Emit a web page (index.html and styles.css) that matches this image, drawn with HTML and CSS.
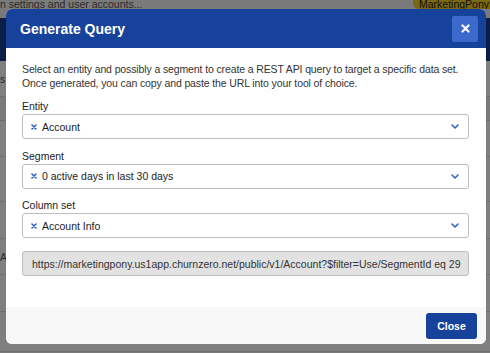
FILE: index.html
```html
<!DOCTYPE html>
<html>
<head>
<meta charset="utf-8">
<link rel="stylesheet" href="styles.css">
</head>
<body>
<div class="page">
  <div class="topbar">
    <span class="crumb">n settings and user accounts...</span>
    <span class="badge">MarketingPony</span>
  </div>
  <div class="navbar"></div>
  <div class="table">
    <div class="row r1"><span class="cell">s</span></div>
    <div class="row r2"></div>
    <div class="row r3"></div>
    <div class="row r4"></div>
    <div class="row r5"></div>
    <div class="row r6"><span class="cell">AP</span></div>
    <div class="row r7"></div>
    <div class="row r8"></div>
  </div>
</div>
<div class="overlay"></div>
<div class="modal">
  <div class="modal-header">
    <h1 class="title">Generate Query</h1>
    <button class="x-btn" aria-label="close">
      <svg width="9" height="9" viewBox="0 0 9 9"><path d="M1.5 1.5 L7.5 7.5 M7.5 1.5 L1.5 7.5" stroke="#fff" stroke-width="2.2" stroke-linecap="round"/></svg>
    </button>
  </div>
  <div class="modal-body">
    <p class="desc">Select an entity and possibly a segment to create a REST API query to target a specific data set. Once generated, you can copy and paste the URL into your tool of choice.</p>
    <div class="field">
      <div class="label">Entity</div>
      <div class="select">
        <span class="tag-x"><svg width="6" height="6" viewBox="0 0 6 6"><path d="M1 1 L5 5 M5 1 L1 5" stroke="#2f63c8" stroke-width="1.6" stroke-linecap="round"/></svg></span>
        <span class="val">Account</span>
        <svg class="chev" width="8" height="5" viewBox="0 0 8 5"><path d="M1 1 L4 4 L7 1" fill="none" stroke="#2f63c8" stroke-width="1.6" stroke-linecap="round" stroke-linejoin="round"/></svg>
      </div>
    </div>
    <div class="field">
      <div class="label">Segment</div>
      <div class="select">
        <span class="tag-x"><svg width="6" height="6" viewBox="0 0 6 6"><path d="M1 1 L5 5 M5 1 L1 5" stroke="#2f63c8" stroke-width="1.6" stroke-linecap="round"/></svg></span>
        <span class="val">0 active days in last 30 days</span>
        <svg class="chev" width="8" height="5" viewBox="0 0 8 5"><path d="M1 1 L4 4 L7 1" fill="none" stroke="#2f63c8" stroke-width="1.6" stroke-linecap="round" stroke-linejoin="round"/></svg>
      </div>
    </div>
    <div class="field">
      <div class="label">Column set</div>
      <div class="select">
        <span class="tag-x"><svg width="6" height="6" viewBox="0 0 6 6"><path d="M1 1 L5 5 M5 1 L1 5" stroke="#2f63c8" stroke-width="1.6" stroke-linecap="round"/></svg></span>
        <span class="val">Account Info</span>
        <svg class="chev" width="8" height="5" viewBox="0 0 8 5"><path d="M1 1 L4 4 L7 1" fill="none" stroke="#2f63c8" stroke-width="1.6" stroke-linecap="round" stroke-linejoin="round"/></svg>
      </div>
    </div>
    <div class="url">https://marketingpony.us1app.churnzero.net/public/v1/Account?$filter=Use/SegmentId eq 29</div>
  </div>
  <div class="modal-footer">
    <button class="close-btn">Close</button>
  </div>
</div>
</body>
</html>
```
FILE: styles.css
```css
* { box-sizing: border-box; }
html, body { margin: 0; padding: 0; }
body {
  width: 490px;
  height: 353px;
  overflow: hidden;
  position: relative;
  font-family: "Liberation Sans", Arial, sans-serif;
  background: #f4f4f4;
}
.page { width: 490px; height: 353px; overflow: hidden; }
.topbar {
  height: 18px;
  background: #f4f4f4;
  display: flex;
  justify-content: space-between;
  align-items: flex-start;
  overflow: hidden;
}
.crumb {
  font-size: 10.5px;
  line-height: 10px;
  color: #555;
  margin-top: -1px;
}
.badge {
  display: block;
  height: 9px;
  width: 77px;
  background: #f7d31f;
  border-bottom-left-radius: 6px;
  font-size: 10.5px;
  line-height: 8px;
  color: #222;
  padding-left: 6px;
  overflow: hidden;
  white-space: nowrap;
}
.navbar { height: 43px; background: #1a3c8c; }
.table { background: #fff; }
.row { border-bottom: 1px solid #ddd; font-size: 10.5px; color: #555; display: flex; align-items: center; }
.r1 { height: 36px; background: #fff; }
.r2 { height: 24px; background: #f3f3f3; }
.r3 { height: 36px; }
.r4 { height: 45px; }
.r5 { height: 37px; }
.r6 { height: 36px; }
.r7 { height: 37px; }
.r8 { height: 40px; }
.overlay {
  position: absolute;
  inset: 0;
  background: rgba(0,0,0,0.5);
}
.modal {
  position: absolute;
  left: 6px;
  top: 9px;
  width: 480px;
  height: 335px;
  background: #fff;
  border-radius: 6px;
  overflow: hidden;
  display: flex;
  flex-direction: column;
}
.modal-header {
  height: 39px;
  background: #17429b;
  display: flex;
  align-items: center;
  justify-content: space-between;
  padding: 0 8px 0 14px;
}
.title {
  margin: 0;
  font-size: 14px;
  font-weight: 700;
  color: #fff;
}
.x-btn {
  width: 26px;
  height: 26px;
  border: 0;
  border-radius: 2px;
  background: #3b69cc;
  padding: 0;
  display: flex;
  align-items: center;
  justify-content: center;
}
.modal-body {
  flex: 1;
  padding: 14px 17px 0 16px;
}
.desc {
  margin: 0 -6px 10px 0;
  font-size: 10.5px;
  line-height: 14px;
  color: #333;
  letter-spacing: -0.12px;
}
.field { margin-bottom: 10.5px; }
.label {
  font-size: 10.5px;
  line-height: 12px;
  color: #222;
  margin-bottom: 2px;
}
.select {
  height: 25px;
  border: 1px solid #bdbdbd;
  border-radius: 3px;
  display: flex;
  align-items: center;
  padding: 0 8px 0 8px;
  font-size: 10.5px;
  color: #222;
}
.tag-x { display: flex; width: 6px; margin-right: 5px; }
.val { flex: 1; }
.chev { margin-right: 1px; }
.url {
  margin-top: 13px;
  height: 25px;
  background: #e2e2e2;
  border: 1px solid #bdbdbd;
  border-radius: 3px;
  font-size: 10.5px;
  color: #333;
  display: flex;
  align-items: center;
  padding-left: 9px;
  white-space: nowrap;
  overflow: hidden;
}
.modal-footer {
  height: 37px;
  background: #f8f8f8;
  display: flex;
  justify-content: flex-end;
  align-items: center;
  padding-right: 9px;
}
.close-btn {
  width: 51px;
  height: 26px;
  border: 0;
  border-radius: 3px;
  background: #17429b;
  color: #fff;
  font-family: "Liberation Sans", Arial, sans-serif;
  font-size: 10.5px;
  font-weight: 700;
}
```
